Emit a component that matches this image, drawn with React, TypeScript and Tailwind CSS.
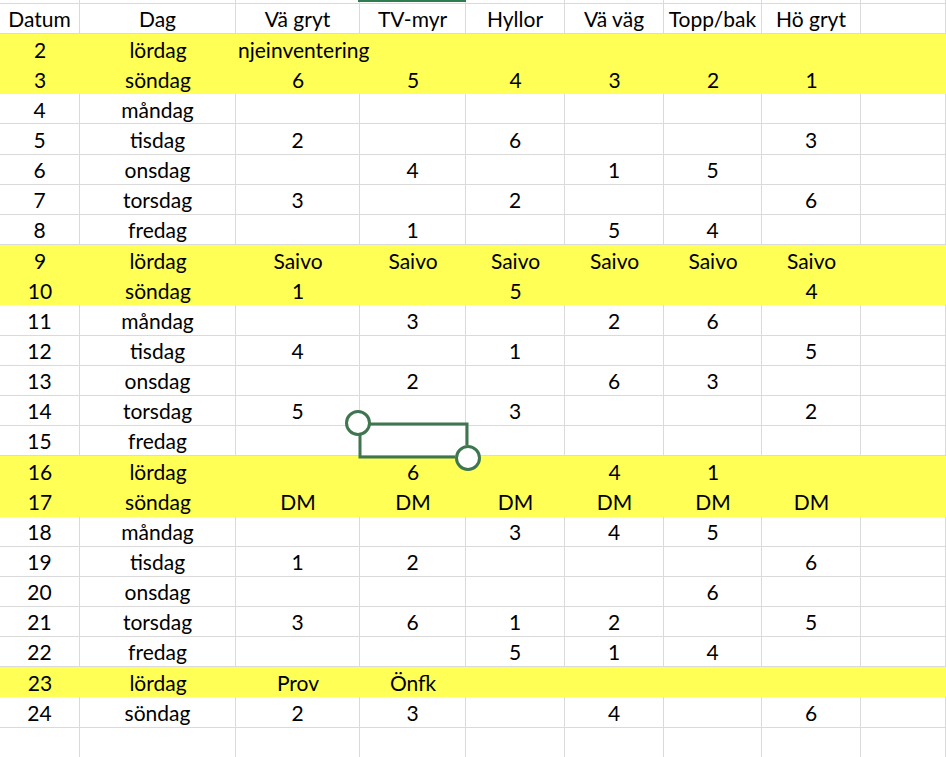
import React from 'react';

const cols = ['w-[80px]', 'w-[156px]', 'w-[124px]', 'w-[106px]', 'w-[99px]', 'w-[99px]', 'w-[98px]', 'w-[99px]', 'flex-1'];

const header = ['Datum', 'Dag', 'Vä gryt', 'TV-myr', 'Hyllor', 'Vä väg', 'Topp/bak', 'Hö gryt', ''];

type Row = { cells: string[]; yellow?: boolean };

const rows: Row[] = [
  { cells: ['2', 'lördag'], yellow: true },
  { cells: ['3', 'söndag', '6', '5', '4', '3', '2', '1'], yellow: true },
  { cells: ['4', 'måndag'] },
  { cells: ['5', 'tisdag', '2', '', '6', '', '', '3'] },
  { cells: ['6', 'onsdag', '', '4', '', '1', '5', ''] },
  { cells: ['7', 'torsdag', '3', '', '2', '', '', '6'] },
  { cells: ['8', 'fredag', '', '1', '', '5', '4', ''] },
  { cells: ['9', 'lördag', 'Saivo', 'Saivo', 'Saivo', 'Saivo', 'Saivo', 'Saivo'], yellow: true },
  { cells: ['10', 'söndag', '1', '', '5', '', '', '4'], yellow: true },
  { cells: ['11', 'måndag', '', '3', '', '2', '6', ''] },
  { cells: ['12', 'tisdag', '4', '', '1', '', '', '5'] },
  { cells: ['13', 'onsdag', '', '2', '', '6', '3', ''] },
  { cells: ['14', 'torsdag', '5', '', '3', '', '', '2'] },
  { cells: ['15', 'fredag'] },
  { cells: ['16', 'lördag', '', '6', '', '4', '1', ''], yellow: true },
  { cells: ['17', 'söndag', 'DM', 'DM', 'DM', 'DM', 'DM', 'DM'], yellow: true },
  { cells: ['18', 'måndag', '', '', '3', '4', '5', ''] },
  { cells: ['19', 'tisdag', '1', '2', '', '', '', '6'] },
  { cells: ['20', 'onsdag', '', '', '', '', '6', ''] },
  { cells: ['21', 'torsdag', '3', '6', '1', '2', '', '5'] },
  { cells: ['22', 'fredag', '', '', '5', '1', '4', ''] },
  { cells: ['23', 'lördag', 'Prov', 'Önfk', '', '', '', ''], yellow: true },
  { cells: ['24', 'söndag', '2', '3', '', '4', '', '6'] },
  { cells: [] },
];

function Connector() {
  return (
    <svg className="absolute left-[340px] top-[405px]" width="146" height="72" viewBox="0 0 146 72" fill="none">
      <path d="M30 19 H127 V40 M20 30 V52 H115" stroke="#3f7650" strokeWidth="3" />
      <circle cx="18" cy="18" r="11.5" fill="white" stroke="#3f7650" strokeWidth="3" />
      <circle cx="128" cy="53" r="11.5" fill="white" stroke="#3f7650" strokeWidth="3" />
    </svg>
  );
}

export default function App() {
  return (
    <div
      className="relative h-[757px] w-[946px] overflow-hidden bg-white text-[21px] text-black"
      style={{ fontFamily: 'Lato, "Open Sans", sans-serif' }}
    >
      {/* sliver of the row above */}
      <div className="flex h-[4px]">
        {cols.map((w, i) => (
          <div key={i} className={`${w} border-r border-b border-[#dadada] ${i === 3 ? 'relative' : ''}`}>
            {i === 3 && <div className="absolute -left-[2px] -right-[1px] top-0 h-[2px] bg-[#2e7d4f]" />}
          </div>
        ))}
      </div>
      <div className="flex h-[30px]">
        {header.map((h, i) => (
          <div key={i} className={`${cols[i]} flex items-center justify-center border-r border-b border-[#dadada] pt-[1px]`}>
            {h}
          </div>
        ))}
      </div>
      {rows.map((r, ri) => (
        <div key={ri} className={`flex h-[30.17px] ${r.yellow ? 'bg-[#ffff55]' : ''}`}>
          {cols.map((w, ci) => {
            const v = r.cells[ci] ?? '';
            const special = ri === 0 && ci === 2;
            return (
              <div
                key={ci}
                className={`${w} flex items-center whitespace-nowrap pt-[1px] ${
                  special ? 'justify-start overflow-visible pl-[2px]' : 'justify-center'
                } ${r.yellow ? '' : 'border-r border-b border-[#dadada]'}`}
              >
                {special ? 'njeinventering' : v}
              </div>
            );
          })}
        </div>
      ))}
      <Connector />
    </div>
  );
}
